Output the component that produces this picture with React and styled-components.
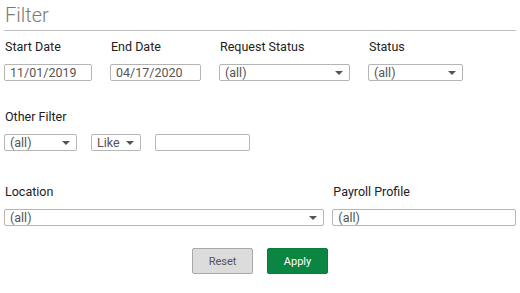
import React from "react";
import styled, { createGlobalStyle } from "styled-components";

const Global = createGlobalStyle`
  html, body { margin: 0; padding: 0; background: #fff; }
  body { font-family: Roboto, "Liberation Sans", Arial, sans-serif; color: #222; }
  * { box-sizing: border-box; }
`;

const Panel = styled.div`
  width: 520px;
  padding: 4px 4px 0 4px;
`;

const Title = styled.h2`
  margin: 0;
  padding: 0 0 4px 1px;
  font-size: 20px;
  font-weight: 300;
  line-height: 22px;
  color: #7a7a7a;
  border-bottom: 1px solid #bdbdbd;
`;

const Row = styled.div`
  display: flex;
  gap: ${(p) => p.$gap}px;
  margin-top: ${(p) => p.$top}px;
`;

const Field = styled.div`
  display: flex;
  flex-direction: column;
  width: ${(p) => p.$w}px;
`;

const Label = styled.label`
  font-size: 12.5px;
  line-height: 14px;
  color: #222;
  padding-left: 1px;
  margin-bottom: 10px;
`;

const Box = styled.div`
  width: ${(p) => (p.$w ? `${p.$w}px` : "100%")};
  height: 17px;
  border: 1px solid #b5b5b5;
  border-radius: 2px;
  background: #fff;
  display: flex;
  align-items: center;
  padding: 0 6px 0 5px;
  font-size: 12.5px;
  color: #555;
`;

const BoxText = styled.span`
  flex: 1;
  line-height: 15px;
`;

const Caret = styled.span`
  width: 0;
  height: 0;
  border-left: 4px solid transparent;
  border-right: 4px solid transparent;
  border-top: 4px solid #555;
  margin-left: 4px;
`;

const Actions = styled.div`
  display: flex;
  justify-content: center;
  gap: 14px;
  margin-top: 22px;
`;

const Button = styled.button`
  width: 61px;
  height: 26px;
  border-radius: 2px;
  font-family: Roboto, "Liberation Sans", Arial, sans-serif;
  font-size: 11px;
  cursor: pointer;
  border: 1px solid ${(p) => (p.$primary ? "#0b7a3b" : "#a9a9a9")};
  background: ${(p) => (p.$primary ? "#0a8542" : "#dcdcdc")};
  color: ${(p) => (p.$primary ? "#fff" : "#555")};
`;

const Select = ({ w, children }) => (
  <Box $w={w}>
    <BoxText>{children}</BoxText>
    <Caret />
  </Box>
);

const Input = ({ w, children }) => (
  <Box $w={w}>
    <BoxText>{children}</BoxText>
  </Box>
);

export default function App() {
  return (
    <>
      <Global />
      <Panel>
        <Title>Filter</Title>
        <Row $gap={18} $top={9}>
          <Field $w={88}>
            <Label>Start Date</Label>
            <Input>11/01/2019</Input>
          </Field>
          <Field $w={91}>
            <Label>End Date</Label>
            <Input>04/17/2020</Input>
          </Field>
          <Field $w={131}>
            <Label>Request Status</Label>
            <Select>(all)</Select>
          </Field>
          <Field $w={95}>
            <Label>Status</Label>
            <Select>(all)</Select>
          </Field>
        </Row>
        <Row $gap={0} $top={29}>
          <Field $w={300}>
            <Label>Other Filter</Label>
            <Row $gap={14} $top={0}>
              <Select w={73}>(all)</Select>
              <Select w={50}>Like</Select>
              <Input w={95}></Input>
            </Row>
          </Field>
        </Row>
        <Row $gap={8} $top={34}>
          <Field $w={321}>
            <Label>Location</Label>
            <Select>(all)</Select>
          </Field>
          <Field $w={184}>
            <Label>Payroll Profile</Label>
            <Input>(all)</Input>
          </Field>
        </Row>
        <Actions>
          <Button>Reset</Button>
          <Button $primary>Apply</Button>
        </Actions>
      </Panel>
    </>
  );
}
